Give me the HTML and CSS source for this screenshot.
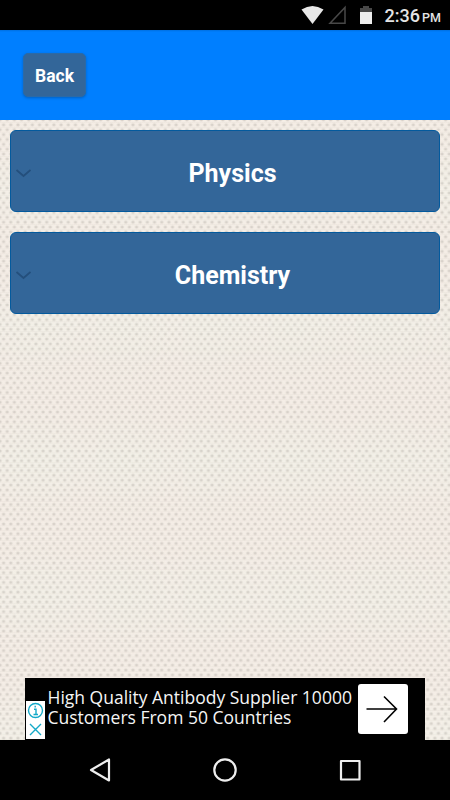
FILE: index.html
```html
<!DOCTYPE html>
<html lang="en">
<head>
<meta charset="utf-8">
<title>Subjects</title>
<link rel="stylesheet" href="styles.css">
</head>
<body>
<div class="status">
  <svg class="signals" width="75" height="30" viewBox="0 0 75 30" aria-hidden="true">
    <path d="M1.5 9.5Q12.5 2.5 23.500 9.500L12.500 24Z" fill="#e8e8e8"/>
    <path d="M45 7.500V23.300H30Z" fill="none" stroke="#484848" stroke-width="1.500"/>
    <path d="M60 8V12H72V8H69V6H63V8Z" fill="#484848"/>
    <path d="M60 12H72V24H60Z" fill="#eee"/>
  </svg>
  <span class="clock">2:36</span><span class="period">PM</span>
</div>
<header class="header"><button class="back">Back</button></header>
<main class="content">
  <button class="subject">
    <svg class="chevron" width="16" height="10" viewBox="0 0 16 10"><path d="M1.500 2L8.500 8L15.500 2"/></svg>
    <span class="label">Physics</span>
  </button>
  <button class="subject">
    <svg class="chevron" width="16" height="10" viewBox="0 0 16 10"><path d="M1.500 2L8.500 8L15.500 2"/></svg>
    <span class="label">Chemistry</span>
  </button>
  <div class="ad">
    <svg class="choices" width="19" height="38" viewBox="0 0 19 38" fill="none" stroke="#14a9c8" stroke-width="1.400">
      <circle cx="9.500" cy="9.500" r="7"/>
      <path d="M8 8.200H10V13.500M7.500 13.500H12M9.200 4.800V6.500M4 23L15 34M15 23L4 34"/>
    </svg>
    <p class="copy">High Quality Antibody Supplier 10000<br>Customers From 50 Countries</p>
    <div class="go">
      <svg width="50" height="50" viewBox="0 0 50 50"><path d="M8.500 25H38M26 12.500L38.500 25L26 38" fill="none" stroke="#000" stroke-width="1.600"/></svg>
    </div>
  </div>
</main>
<nav class="nav">
  <svg width="26" height="26" viewBox="0 0 26 26"><path d="M22 2.500V23.500L4 13Z"/></svg>
  <svg width="26" height="26" viewBox="0 0 26 26"><circle cx="13" cy="13" r="10.700"/></svg>
  <svg width="26" height="26" viewBox="0 0 26 26"><path d="M4 4H22.500V22.500H4Z"/></svg>
</nav>
</body>
</html>
```
FILE: styles.css
```css
* { box-sizing: border-box; }
body {
  margin: 0;
  width: 450px;
  height: 800px;
  display: flex;
  flex-direction: column;
  overflow: hidden;
  background: #000;
  font-family: Roboto, sans-serif;
}
button { font-family: inherit; color: #fff; cursor: pointer; }
svg { display: block; flex: none; }
.status {
  height: 30px;
  display: flex;
  align-items: center;
  color: #e4e4e4;
  padding-left: 300px;
}
.clock { margin: 2px 0 0 9.500px; font-size: 18px; line-height: 22px; font-weight: 500; }
.period { margin: 5px 0 0 2px; font-size: 12.500px; font-weight: 500; }
.header {
  height: 90px;
  padding: 23px;
  background: linear-gradient(#006fe0, #007fff 2px);
}
.back {
  display: block;
  width: 63px;
  height: 44px;
  padding: 2px 0 0;
  border: 1px solid #2a6aa8;
  border-radius: 5px;
  background: #369;
  box-shadow: 0 1px 3px rgba(0, 0, 0, .25);
  font-size: 17.500px;
  font-weight: 700;
}
.content {
  height: 620px;
  padding: 10px 10px 0;
  display: flex;
  flex-direction: column;
  gap: 20px;
  background-color: #f5f0e9;
  background-image:
    radial-gradient(ellipse 2.500px 2px, rgba(130, 125, 117, .35), transparent),
    radial-gradient(ellipse 2.500px 2px, rgba(130, 125, 117, .35), transparent),
    linear-gradient(rgba(150, 140, 125, .06) 0 1px, transparent 1.500px),
    radial-gradient(ellipse at 30% 50%, rgba(240, 240, 230, .35), transparent 70%),
    linear-gradient(rgba(242, 226, 218, .2) 20%, rgba(240, 239, 229, .3) 50%, rgba(242, 226, 218, .2) 80%);
  background-size: 7.200px 9.740px, 7.200px 9.740px, 100% 4.870px, 86.400px 136.400px, 100% 136.400px;
  background-position: 0 0, 3.600px 4.870px, 0 2px, 10px 0, 0 0;
}
.subject {
  height: 82px;
  flex: none;
  display: flex;
  align-items: center;
  padding: 4px 5px 0 4px;
  border: 1px solid #045a9d;
  border-radius: 6px;
  background: #369;
}
.chevron { fill: none; stroke: #244f7c; stroke-width: 1.800; }
.label { flex: 1; text-align: center; font-size: 25px; font-weight: 700; }
.ad {
  width: 400px;
  height: 62px;
  margin: auto auto 0;
  display: flex;
  align-items: flex-start;
  background: #000;
  color: #f5f5f5;
}
.choices { margin: 23px 0 0 1px; background: #fff; }
.copy {
  width: 310.500px;
  margin: 9px 0 0 2.500px;
  font: 17.500px/20px "Open Sans", sans-serif;
  white-space: nowrap;
}
.go { margin-top: 6px; width: 50px; height: 50px; border-radius: 3px; background: #fff; }
.nav {
  height: 60px;
  padding: 0 87px;
  display: flex;
  justify-content: space-between;
  align-items: center;
}
.nav svg { fill: none; stroke: #eee; stroke-width: 2.200; stroke-linejoin: round; }
```
